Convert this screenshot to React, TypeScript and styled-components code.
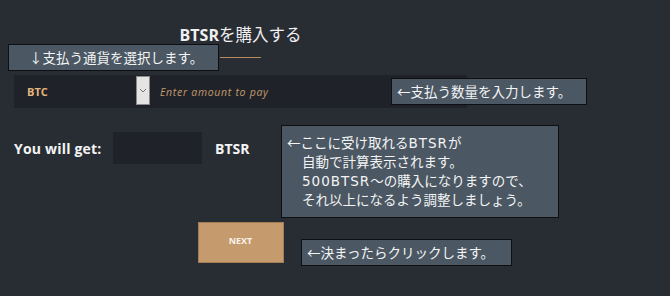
import React from "react";
import styled, { createGlobalStyle } from "styled-components";

const GlobalStyle = createGlobalStyle`
  html, body {
    margin: 0;
    padding: 0;
    background-color: #282d34;
  }
`;

const Page = styled.div`
  position: relative;
  width: 670px;
  height: 296px;
  overflow: hidden;
  background-color: #282d34;
  font-family: "Open Sans", Lato, "Noto Sans CJK JP", sans-serif;
`;

const Form = styled.div`
  display: flex;
  flex-direction: column;
  align-items: center;
  width: 453px;
  margin-left: 14px;
  padding-top: 23px;
`;

const Title = styled.h2`
  margin: 0;
  font-size: 16.5px;
  font-weight: 400;
  color: #f0f0f0;
  font-family: "Noto Sans CJK JP", sans-serif;
  line-height: 22px;
  b {
    font-family: "Open Sans", sans-serif;
    font-weight: 700;
    font-size: 16px;
  }
`;

const TitleLine = styled.div`
  width: 41px;
  height: 1px;
  margin-top: 11px;
  background-color: #b98c5d;
`;

const PayRow = styled.div`
  display: flex;
  align-self: stretch;
  height: 33px;
  margin-top: 17px;
  background-color: #1f2329;
`;

const CurrencySelect = styled.div`
  display: flex;
  align-items: center;
  width: 122px;
  padding-left: 13px;
  box-sizing: border-box;
  color: #e6b57e;
  font-size: 11px;
  font-weight: 700;
`;

const Chevron = styled.div`
  display: flex;
  align-items: center;
  justify-content: center;
  width: 14px;
  margin: 1px 0 3px;
  background-color: #e4e4e4;
  border: 1px solid #8a8a8a;
  box-sizing: border-box;
`;

const AmountInput = styled.div`
  flex: 1;
  display: flex;
  align-items: center;
  padding-left: 10px;
  color: #c49a6c;
  font-size: 10.5px;
  font-style: italic;
  letter-spacing: 0.7px;
`;

const GetRow = styled.div`
  display: flex;
  align-items: center;
  align-self: stretch;
  margin-top: 24px;
  height: 32px;
  color: #f4f4f4;
  font-size: 14px;
  font-weight: 700;
`;

const GetLabel = styled.span`
  width: 99px;
  letter-spacing: 0.2px;
`;

const GetBox = styled.div`
  width: 89px;
  height: 32px;
  background-color: #1f2329;
  margin-right: 13px;
`;

const NextButton = styled.button`
  width: 86px;
  height: 41px;
  margin-top: 58px;
  border: 1px solid #a57d54;
  background-color: #c59a6d;
  color: #fbf3ea;
  font-family: "Open Sans", sans-serif;
  font-size: 9px;
  font-weight: 700;
  padding: 0 0 4px;
`;

const Note = styled.div<{ $x: number; $y: number; $w: number; $h: number }>`
  position: absolute;
  left: ${(p) => p.$x}px;
  top: ${(p) => p.$y}px;
  width: ${(p) => p.$w}px;
  height: ${(p) => p.$h}px;
  box-sizing: border-box;
  background-color: #4b5762;
  border: 1px solid #0d0f12;
  color: #f2f4f5;
  font-family: "Noto Sans CJK JP", sans-serif;
  font-size: 13.5px;
  line-height: 18.5px;
  white-space: nowrap;
  padding: 3px 0 0 5px;
`;

const NoteLine = styled.div<{ $indent?: boolean }>`
  height: 19px;
  line-height: 19px;
  padding-left: ${(p) => (p.$indent ? 15 : 0)}px;
`;

const Wide = styled.span`
  font-family: "DejaVu Sans", sans-serif;
  font-size: 13.5px;
  line-height: 19px;
  letter-spacing: 1px;
`;

export default function App() {
  return (
    <Page>
      <GlobalStyle />
      <Form>
        <Title>
          <b>BTSR</b>を購入する
        </Title>
        <TitleLine />
        <PayRow>
          <CurrencySelect>BTC</CurrencySelect>
          <Chevron>
            <svg width="8" height="5" viewBox="0 0 8 5">
              <path d="M1 1l3 3 3-3" fill="none" stroke="#777" strokeWidth="1" />
            </svg>
          </Chevron>
          <AmountInput>Enter amount to pay</AmountInput>
        </PayRow>
        <GetRow>
          <GetLabel>You will get:</GetLabel>
          <GetBox />
          <span>BTSR</span>
        </GetRow>
        <NextButton>NEXT</NextButton>
      </Form>
      <Note $x={8} $y={44} $w={211} $h={27} style={{ paddingLeft: 20 }}>
        ↓支払う通貨を選択します。
      </Note>
      <Note $x={391} $y={78} $w={196} $h={27}>
        ←支払う数量を入力します。
      </Note>
      <Note $x={281} $y={125} $w={278} $h={93} style={{ paddingTop: 7 }}>
        <NoteLine>
          ←ここに受け取れる<Wide>BTSR</Wide>が
        </NoteLine>
        <NoteLine $indent>自動で計算表示されます。</NoteLine>
        <NoteLine $indent>
          <Wide>500BTSR</Wide>～の購入になりますので、
        </NoteLine>
        <NoteLine $indent>それ以上になるよう調整しましょう。</NoteLine>
      </Note>
      <Note $x={301} $y={239} $w={211} $h={27}>
        ←決まったらクリックします。
      </Note>
    </Page>
  );
}
